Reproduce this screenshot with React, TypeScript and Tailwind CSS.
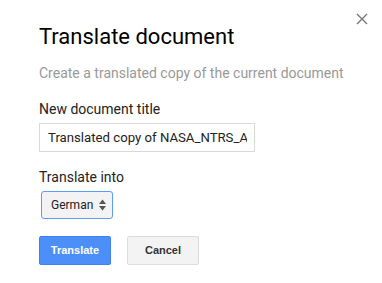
import React from "react";

export default function App() {
  return (
    <div className="relative w-[382px] h-[283px] bg-white overflow-hidden" style={{ fontFamily: "Roboto, 'Liberation Sans', Arial, sans-serif" }}>
      {/* Close */}
      <button className="absolute left-[355px] top-[12px] w-[14px] h-[14px] flex items-center justify-center">
        <svg width="12" height="12" viewBox="0 0 12 12">
          <path d="M1 1 L11 11 M11 1 L1 11" stroke="#777" strokeWidth="1.4" />
        </svg>
      </button>

      <div className="pl-[39px] pt-[21px] flex flex-col">
        <h1 className="text-[22px] leading-[32px] text-black font-normal">Translate document</h1>
        <p className="mt-[10px] text-[14px] leading-[20px] text-[#999]">Create a translated copy of the current document</p>

        <label className="mt-[16px] text-[14px] leading-[20px] text-[#222]">New document title</label>
        <input
          readOnly
          value="Translated copy of NASA_NTRS_Archive"
          className="mt-[4px] w-[216px] h-[29px] border border-[#d9d9d9] pl-[8px] pr-[7px] text-[13.2px] text-[#222] outline-none"
        />

        <label className="mt-[15px] text-[14px] leading-[20px] text-[#222]">Translate into</label>
        <div className="mt-[4px] ml-[2px] w-[72px] h-[28px] rounded-[3px] border border-[#5c9cf5] bg-[#f3f3f3] flex items-center pl-[9px] pr-[5px] justify-between">
          <span className="text-[12px] text-[#222]">German</span>
          <svg width="9" height="14" viewBox="0 0 9 14">
            <path d="M4.5 1.5 L8 6 L1 6 Z" fill="#555" />
            <path d="M1 8 L8 8 L4.5 12.5 Z" fill="#555" />
          </svg>
        </div>

        <div className="mt-[17px] flex gap-[16px]" style={{ fontFamily: "'Liberation Sans', Arial, sans-serif" }}>
          <button className="w-[72px] h-[29px] rounded-[2px] border border-[#3d82f0] bg-[#4d8ff8] text-white text-[11px] font-bold">Translate</button>
          <button className="w-[72px] h-[29px] rounded-[2px] border border-[#dcdcdc] bg-[#f3f3f3] text-[#333] text-[11px] font-bold">Cancel</button>
        </div>
      </div>
    </div>
  );
}
